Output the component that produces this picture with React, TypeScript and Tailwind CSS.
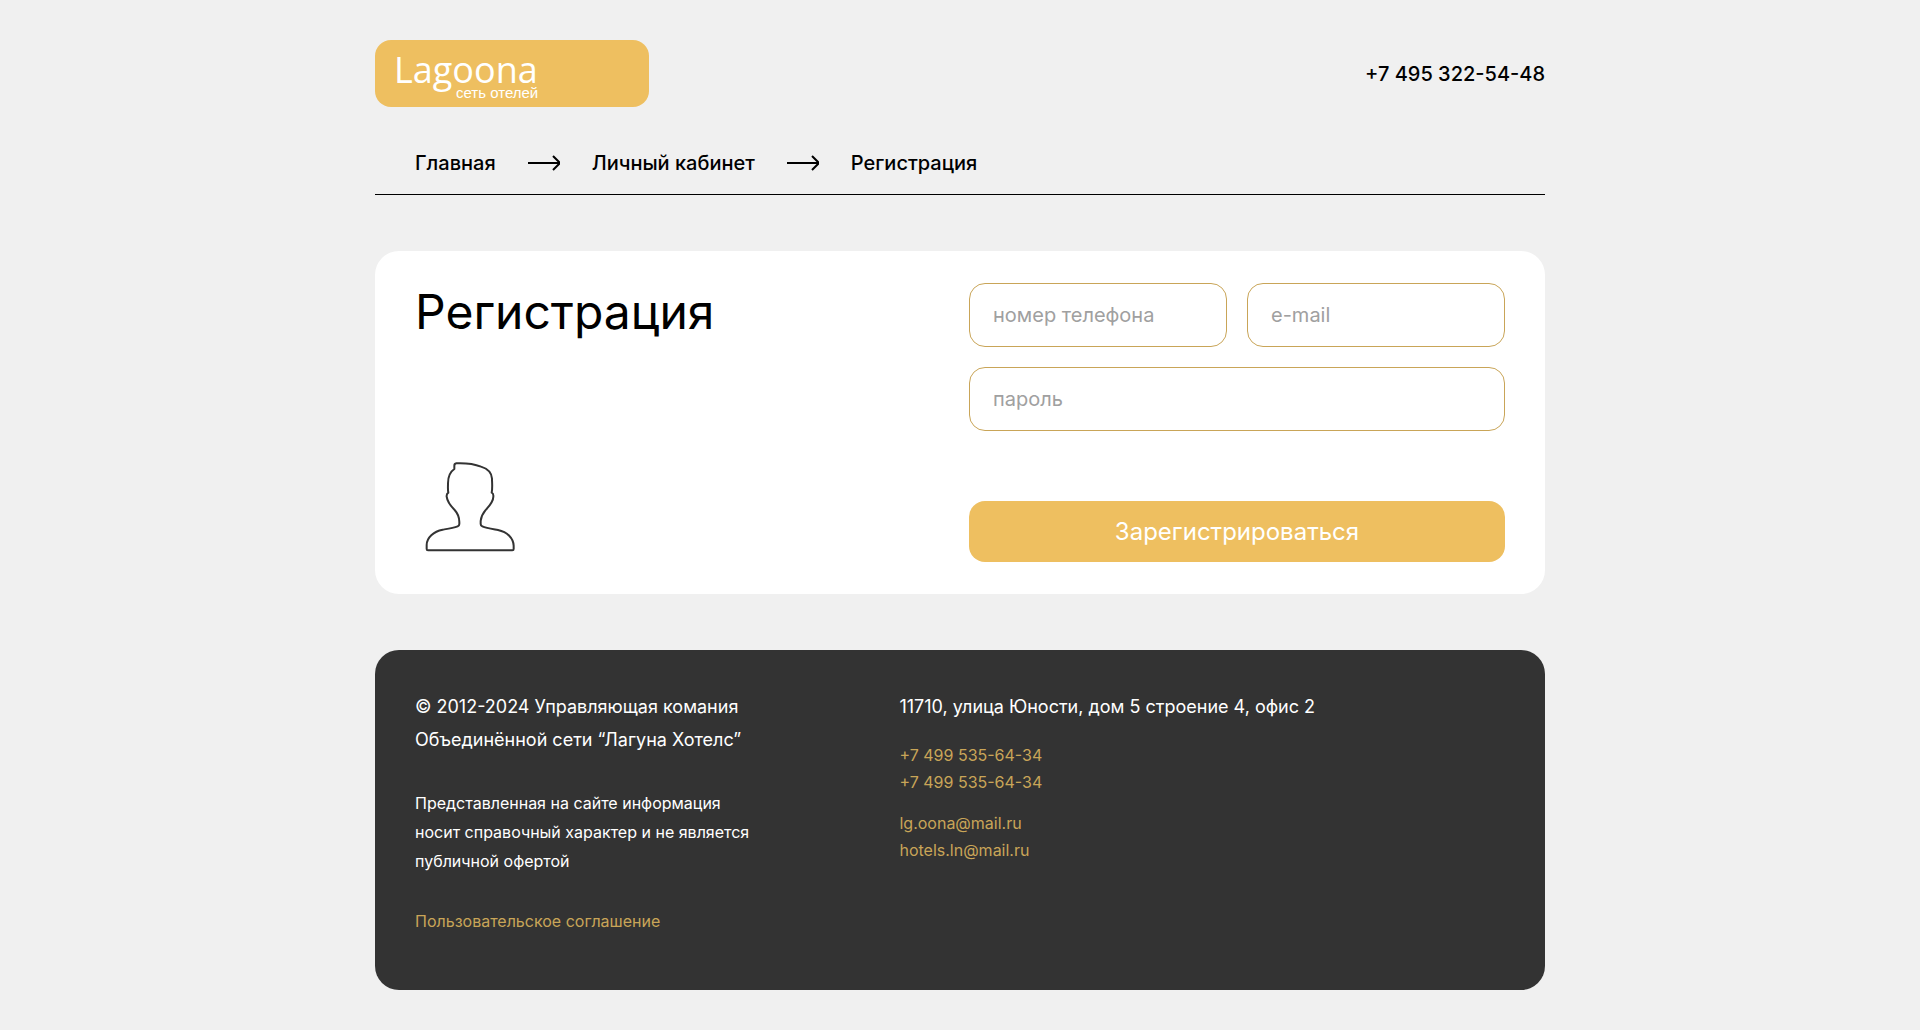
import type { InputHTMLAttributes } from "react";

const crumbs = ["Главная", "Личный кабинет", "Регистрация"];
const phones = ["+7 499 535-64-34", "+7 499 535-64-34"];
const mails = ["lg.oona@mail.ru", "hotels.ln@mail.ru"];

function Arrow() {
  return (
    <svg width="32" height="16" viewBox="0 0 32 16" fill="none" stroke="#000" strokeWidth="2" aria-hidden="true">
      <path d="M0 8H32M25 1L32 8L25 15" />
    </svg>
  );
}

function UserIcon() {
  return (
    <svg
      className="size-[110px]"
      viewBox="45 36 330 330"
      fill="none"
      stroke="#333"
      strokeWidth="6"
      strokeLinejoin="round"
      aria-hidden="true"
    >
      <path d="M84 331H337Q341 331 341 327V317C340 294 322 276 294 270C272 266 258 264 247 259Q242 257 242 252V243C243 231 247 222 256 211C268 198 280 186 280 170Q281 160 275 158C278 145 276 128 276 116C275 97 262 86 243 80C220 71 195 69 169 70Q163 71 163 77V87C148 97 144 110 144 130C144 142 143 150 145 158Q139 162 140 170C142 186 152 198 164 210C173 220 178 232 178 246V252Q178 257 173 259C160 264 146 266 128 269C101 274 80 293 80 315V327Q80 331 84 331Z" />
    </svg>
  );
}

function Field({ label, className = "", ...props }: { label: string } & InputHTMLAttributes<HTMLInputElement>) {
  return (
    <div className={className}>
      <input
        {...props}
        aria-label={label}
        placeholder={label}
        className="block h-16 w-full rounded-2xl border border-[#c9a558] bg-white px-[23px] text-xl text-black outline-none placeholder:text-[#a0a0a0]"
      />
    </div>
  );
}

function Header() {
  return (
    <header>
      <div className="flex items-center justify-between">
        <a href="#" className="relative block h-[67px] w-[274px] rounded-2xl bg-[#eebf60] text-white">
          <span className="absolute top-[10px] left-[19px] font-['Open_Sans'] text-4xl leading-10">Lagoona</span>
          <span className="absolute top-[45px] left-[81px] font-['Liberation_Sans'] text-[15px] leading-4">
            сеть отелей
          </span>
        </a>
        <a href="tel:+74953225448" className="text-xl font-medium">
          +7 495 322-54-48
        </a>
      </div>

      <nav className="mt-11 flex items-center gap-8 border-b border-black px-10 pb-[19px] text-xl leading-6 font-medium">
        {crumbs.map((crumb, i) => (
          <div key={crumb} className="flex items-center gap-8">
            {i > 0 && <Arrow />}
            <a href="#">{crumb}</a>
          </div>
        ))}
      </nav>
    </header>
  );
}

function Registration() {
  return (
    <main className="mt-14 grid grid-cols-2 gap-[18px] rounded-3xl bg-white px-10 py-8">
      <div className="flex flex-col justify-between">
        <h1 className="text-5xl leading-[58px]">Регистрация</h1>
        <UserIcon />
      </div>

      <form className="grid grid-cols-2 gap-5" onSubmit={(e) => e.preventDefault()}>
        <Field label="номер телефона" type="tel" />
        <Field label="e-mail" type="email" />
        <Field label="пароль" type="password" className="col-span-2" />
        <button type="submit" className="col-span-2 mt-[50px] h-[61px] rounded-2xl bg-[#eebf60] text-2xl text-white">
          Зарегистрироваться
        </button>
      </form>
    </main>
  );
}

function Footer() {
  return (
    <footer className="mt-14 grid grid-cols-9 rounded-3xl bg-[#333] px-10 pt-10 pb-[54px] text-white">
      <div className="col-span-4">
        <p className="text-lg leading-[33px]">
          © 2012-2024 Управляющая комания
          <br />
          Объединённой сети “Лагуна Хотелс”
        </p>
        <p className="mt-[33px] text-base leading-[29px]">
          Представленная на сайте информация
          <br />
          носит справочный характер и не является
          <br />
          публичной офертой
        </p>
        <a href="#" className="mt-[31px] block text-base leading-[29px] text-[#c9a558]">
          Пользовательское соглашение
        </a>
      </div>

      <address className="col-span-5 text-base leading-[27px] text-[#c9a558] not-italic">
        <p className="text-lg leading-[33px] text-white">11710, улица Юности, дом 5 строение 4, офис 2</p>
        <div className="mt-[19px]">
          {phones.map((phone, i) => (
            <a key={i} href="tel:+74995356434" className="block">
              {phone}
            </a>
          ))}
        </div>
        <div className="mt-[14px]">
          {mails.map((mail) => (
            <a key={mail} href={`mailto:${mail}`} className="block">
              {mail}
            </a>
          ))}
        </div>
      </address>
    </footer>
  );
}

export default function App() {
  return (
    <div className="min-h-screen bg-[#f0f0f0] py-10 font-['Inter',sans-serif] text-black">
      <div className="mx-auto max-w-[1170px]">
        <Header />
        <Registration />
        <Footer />
      </div>
    </div>
  );
}
